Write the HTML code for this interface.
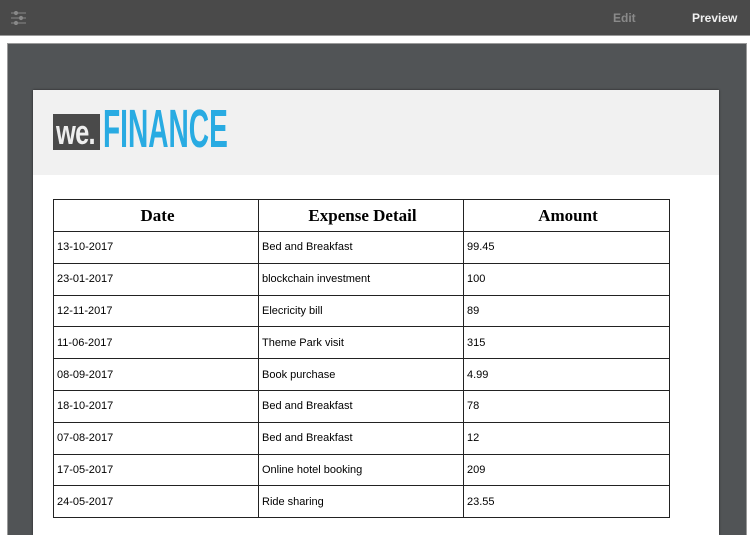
<!DOCTYPE html>
<html style="overflow:hidden;height:535px"><head><style>
*{margin:0;padding:0;box-sizing:border-box}
body{width:750px;height:535px;overflow:hidden;background:#fff;font-family:"Liberation Sans",sans-serif;position:relative}
.top{position:absolute;left:0;top:0;width:750px;height:36px;background:#4a4a4a;border-bottom:1px solid #9a9a9a}
.edit{position:absolute;left:613px;top:11px;font-size:12px;font-weight:bold;color:#8a8a8a}
.prev{position:absolute;left:692px;top:11px;font-size:12px;font-weight:bold;color:#f0f0f0}
.frame{position:absolute;left:7px;top:43px;width:740px;height:492px;background:#515456;border:1px solid #9a9a9a;border-bottom:none}
.page{position:absolute;left:33px;top:90px;width:686px;height:445px;background:#fff;box-shadow:0 0 2px #222}
.hdr{height:85px;background:#f1f1f1;position:relative}
.we{position:absolute;left:20px;top:24px;width:47px;height:36px;background:#4a4a4a;}
.we span{position:absolute;left:3px;top:0;color:#eee;font-weight:bold;font-size:34px;line-height:38px;letter-spacing:-1px;transform:scaleX(.75);transform-origin:left}
.fin{position:absolute;left:70px;top:12px;color:#29abe2;font-size:54px;font-weight:bold;transform:scaleX(.52);transform-origin:left;letter-spacing:0;line-height:54px}
table{position:absolute;left:20px;top:109px;width:617px;border-collapse:collapse}
td,th{border:1.3px solid #222;font-size:11px;padding-left:3px;text-align:left;height:31.8px}
th{font-family:"Liberation Serif",serif;font-size:17px;text-align:center;height:32px}
</style></head><body>
<div class="top">
<svg style="position:absolute;left:10px;top:11px" width="17" height="14" viewBox="0 0 17 14" stroke="#888" fill="#888"><line x1="1" y1="2" x2="16" y2="2"/><line x1="1" y1="7" x2="16" y2="7"/><line x1="1" y1="12" x2="16" y2="12"/><circle cx="6" cy="2" r="1.6"/><circle cx="11" cy="7" r="1.6"/><circle cx="6" cy="12" r="1.6"/></svg>
<div class="edit">Edit</div><div class="prev">Preview</div></div>
<div class="frame"></div>
<div class="page"><div class="hdr"><div class="we"><span>we.</span></div><div class="fin">FINANCE</div></div>
<table>
<tr><th style="width:205px">Date</th><th style="width:205px">Expense Detail</th><th>Amount</th></tr>
<tr><td>13-10-2017</td><td>Bed and Breakfast</td><td>99.45</td></tr>
<tr><td>23-01-2017</td><td>blockchain investment</td><td>100</td></tr>
<tr><td>12-11-2017</td><td>Elecricity bill</td><td>89</td></tr>
<tr><td>11-06-2017</td><td>Theme Park visit</td><td>315</td></tr>
<tr><td>08-09-2017</td><td>Book purchase</td><td>4.99</td></tr>
<tr><td>18-10-2017</td><td>Bed and Breakfast</td><td>78</td></tr>
<tr><td>07-08-2017</td><td>Bed and Breakfast</td><td>12</td></tr>
<tr><td>17-05-2017</td><td>Online hotel booking</td><td>209</td></tr>
<tr><td>24-05-2017</td><td>Ride sharing</td><td>23.55</td></tr>
</table></div>
</body></html>
